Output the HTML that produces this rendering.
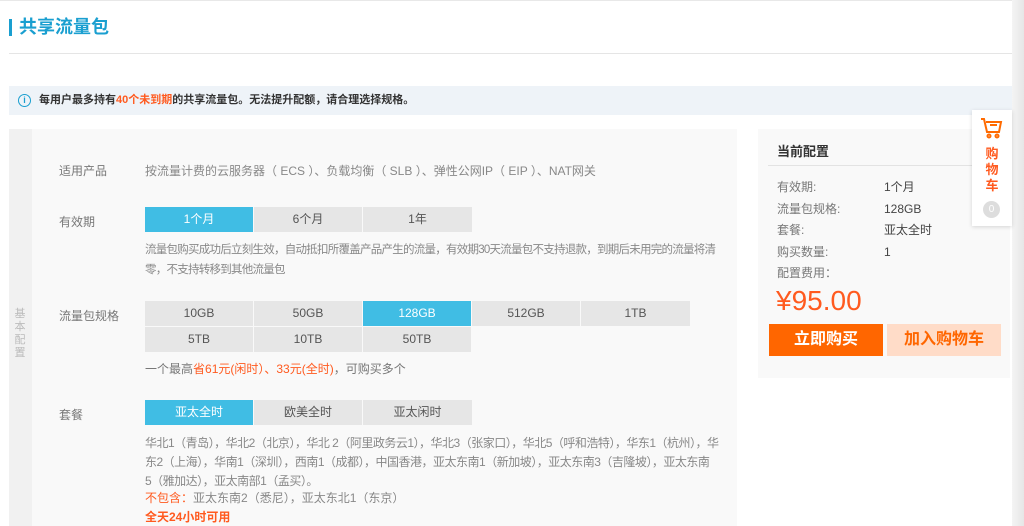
<!DOCTYPE html>
<html><head><meta charset="utf-8"><style>
*{margin:0;padding:0;box-sizing:border-box}
body{width:1024px;height:526px;overflow:hidden;background:#fff;font-family:"Liberation Sans","Noto Sans CJK SC",sans-serif;font-size:12px;color:#666;position:relative}
.a{position:absolute}
.btn{position:absolute;height:25px;line-height:25px;text-align:center;background:#e6e6e6;color:#555;font-size:12px}
.sel{background:#40bde4;color:#fff}
.lbl{position:absolute;left:59px;color:#777;font-size:12px}
.or{color:#ff5a1f}
.nw{white-space:nowrap}
</style></head><body>
<div class="a" style="left:1012px;top:0;width:12px;height:526px;background:linear-gradient(90deg,#f4f4f4,#e6e6e6)"></div>
<div class="a" style="left:0;top:0;width:1012px;height:1px;background:#e8e8e8"></div>
<div class="a" style="left:9px;top:19px;width:3px;height:17px;background:#1a9fd0"></div>
<div class="a" style="left:19px;top:16px;font-size:18px;color:#1a9fd0;font-weight:bold;line-height:22px">共享流量包</div>
<div class="a" style="left:9px;top:53px;width:1003px;height:1px;background:#e5e5e5"></div>
<div class="a" style="left:9px;top:86px;width:1003px;height:29px;background:#eef3f8"></div>
<div class="a" style="left:18px;top:94px;width:13px;height:13px;border:1.5px solid #1a9fd0;border-radius:50%;color:#1a9fd0;font-size:9px;line-height:10px;text-align:center;font-weight:bold">i</div>
<div class="a nw" style="left:39px;top:93px;color:#333;font-size:11px;line-height:15px;font-weight:bold">每用户最多持有<span class="or">40个未到期</span>的共享流量包。无法提升配额，请合理选择规格。</div>

<div class="a" style="left:9px;top:129px;width:728px;height:397px;background:#f9f9f9"></div>
<div class="a" style="left:9px;top:129px;width:23px;height:397px;background:#f1f1f1"></div>
<div class="a" style="left:13px;top:308px;width:14px;color:#bbb;font-size:11px;line-height:13px;text-align:center">基<br>本<br>配<br>置</div>

<div class="lbl" style="top:162px">适用产品</div>
<div class="a nw" style="left:145px;top:162px;color:#888">按流量计费的云服务器（ ECS ）、负载均衡（ SLB ）、弹性公网IP（ EIP ）、NAT网关</div>

<div class="lbl" style="top:213px">有效期</div>
<div class="btn sel" style="left:145px;top:207px;width:108px">1个月</div>
<div class="btn" style="left:254px;top:207px;width:108px">6个月</div>
<div class="btn" style="left:363px;top:207px;width:109px">1年</div>
<div class="a nw" style="left:145px;top:240px;color:#888;line-height:20px;font-size:11.5px;letter-spacing:-0.75px">流量包购买成功后立刻生效，自动抵扣所覆盖产品产生的流量，有效期30天流量包不支持退款，到期后未用完的流量将清<br>零，不支持转移到其他流量包</div>

<div class="lbl" style="top:307px">流量包规格</div>
<div class="btn" style="left:145px;top:301px;width:108px">10GB</div>
<div class="btn" style="left:254px;top:301px;width:108px">50GB</div>
<div class="btn sel" style="left:363px;top:301px;width:108px">128GB</div>
<div class="btn" style="left:472px;top:301px;width:108px">512GB</div>
<div class="btn" style="left:581px;top:301px;width:109px">1TB</div>
<div class="btn" style="left:145px;top:327px;width:108px">5TB</div>
<div class="btn" style="left:254px;top:327px;width:108px">10TB</div>
<div class="btn" style="left:363px;top:327px;width:108px">50TB</div>
<div class="a nw" style="left:145px;top:360px;color:#777">一个最高<span class="or">省61元(闲时）、33元(全时)</span>，可购买多个</div>

<div class="lbl" style="top:406px">套餐</div>
<div class="btn sel" style="left:145px;top:400px;width:108px">亚太全时</div>
<div class="btn" style="left:254px;top:400px;width:108px">欧美全时</div>
<div class="btn" style="left:363px;top:400px;width:109px">亚太闲时</div>
<div class="a nw" style="left:145px;top:434px;color:#888;line-height:19px;letter-spacing:-0.5px">华北1（青岛），华北2（北京），华北 2（阿里政务云1），华北3（张家口），华北5（呼和浩特），华东1（杭州），华<br>东2（上海），华南1（深圳），西南1（成都），中国香港，亚太东南1（新加坡），亚太东南3（吉隆坡），亚太东南<br>5（雅加达），亚太南部1（孟买）。</div>
<div class="a nw" style="left:145px;top:489px;color:#888"><span class="or">不包含：</span>亚太东南2（悉尼），亚太东北1（东京）</div>
<div class="a or" style="left:145px;top:508px;font-weight:bold">全天24小时可用</div>

<div class="a" style="left:758px;top:129px;width:252px;height:249px;background:#f9f9f9"></div>
<div class="a" style="left:777px;top:141px;color:#333;font-size:13px;font-weight:bold">当前配置</div>
<div class="a" style="left:768px;top:165px;width:242px;height:1px;background:#e3e3e3"></div>
<div class="a" style="left:777px;top:177px;color:#777;line-height:21.5px">有效期:<br>流量包规格:<br>套餐:<br>购买数量:<br>配置费用：</div>
<div class="a" style="left:884px;top:177px;color:#444;line-height:21.5px">1个月<br>128GB<br>亚太全时<br>1</div>
<div class="a or" style="left:776px;top:283px;font-size:28px;line-height:36px">¥95.00</div>
<div class="a" style="left:769px;top:324px;width:114px;height:32px;background:#ff6600;color:#fff;font-size:16px;line-height:32px;text-align:center;font-weight:bold">立即购买</div>
<div class="a" style="left:887px;top:324px;width:114px;height:32px;background:#ffdcc8;color:#ff6600;font-size:16px;line-height:32px;text-align:center;font-weight:bold">加入购物车</div>

<div class="a" style="left:972px;top:110px;width:40px;height:116px;background:#fff;box-shadow:0 1px 4px rgba(0,0,0,.15)"></div>
<svg class="a" style="left:980px;top:117px" width="24" height="22" viewBox="0 0 24 22" fill="none" stroke="#ff6a00" stroke-width="2"><path d="M1 2h3l3 13h12l2-10H6"/><path d="M10 8h7"/><circle cx="9" cy="19" r="1.5"/><circle cx="17" cy="19" r="1.5"/></svg>
<div class="a or" style="left:982px;top:146px;width:20px;font-size:13px;line-height:16px;text-align:center;font-weight:bold">购<br>物<br>车</div>
<div class="a" style="left:983px;top:201px;width:17px;height:17px;border-radius:50%;background:#ddd;color:#fff;font-size:10px;line-height:17px;text-align:center">0</div>
</body></html>
